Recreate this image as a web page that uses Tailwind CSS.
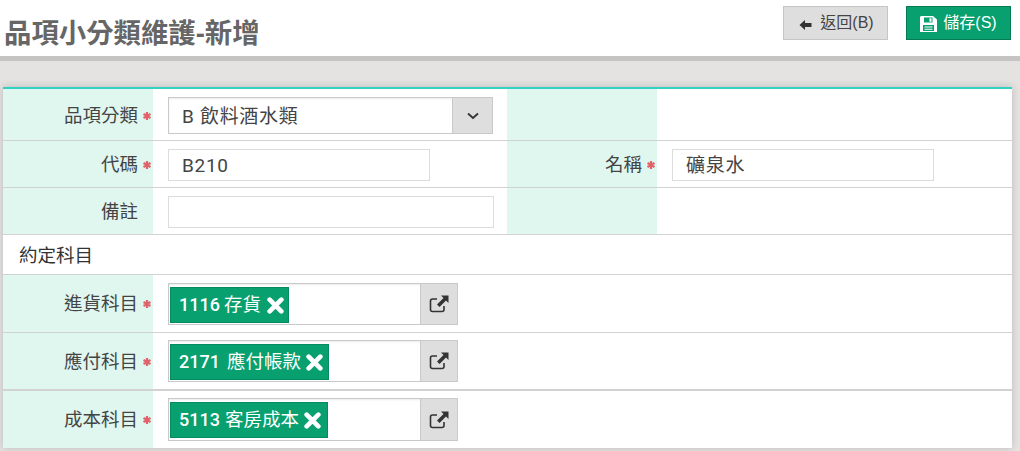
<!DOCTYPE html>
<html lang="zh-Hant">
<head>
  <meta charset="UTF-8" />
  <title>品項小分類維護-新增</title>
  <script src="https://cdn.jsdelivr.net/npm/@tailwindcss/browser@4"></script>
</head>
<body class="h-[451px] w-[1020px] overflow-hidden bg-[#e4e3e2] font-['Liberation_Sans','Noto_Sans_CJK_TC',sans-serif] text-[#444]">

  <!-- header -->
  <header class="flex h-[61px] items-start justify-between border-b-[5px] border-[#c4c4c4] bg-white pl-[4px] pr-[9px]">
    <h1 class="mt-[16px] text-[27.4px] leading-[36px] font-bold text-[#666]">品項小分類維護-新增</h1>
    <div class="mt-[6px] flex gap-[18px]">
      <button class="flex h-[34px] w-[105px] items-center justify-center gap-[8px] border border-[#c6c6c6] bg-[#dedede] pl-[2px] text-[16px] text-[#444]">
        <svg class="mt-[3px] h-[12px] w-[13px]" viewBox="0 0 13 12"><path fill="#333" d="M0.5 6 L6 1 V4 H12.5 V8 H6 V11 Z"/></svg>
        <span class="-mt-[1px]">返回(B)</span>
      </button>
      <button class="flex h-[34px] w-[105px] items-center justify-center gap-[6px] border border-[#067a55] bg-[#08a06f] text-[16px] text-white">
        <svg class="mt-[2px] h-[16px] w-[17px]" viewBox="0 0 17 16"><path fill="#fff" fill-rule="evenodd" d="M1 0 H13 L17 3.5 V16 H0 V1 Z M4 1.5 V6.5 H12.5 V1.5 Z M9.5 2.2 H11.5 V5.8 H9.5 Z M3 9 V15 H14 V9 Z M4.5 10.5 H12.5 V11.5 H4.5 Z M4.5 12.7 H12.5 V13.7 H4.5 Z"/></svg>
        <span class="-mt-[1px]">儲存(S)</span>
      </button>
    </div>
  </header>

  <!-- form card -->
  <main class="ml-[3px] mt-[26px] h-[361px] w-[1009px] border-t-2 border-[#33d1c0] bg-white text-[18.5px] shadow-[0_0_8px_rgba(0,0,0,0.18)]">

    <div class="flex h-[52px] border-b border-[#d2d2d2]">
      <div class="flex w-[150px] items-center justify-end bg-[#e0f7f0] pr-[2px] pt-[2px]">品項分類
        <svg class="ml-[5px] h-[8px] w-[8px]" viewBox="0 0 8 8"><path stroke="#e0636b" stroke-width="2.2" d="M4 0 V8 M0.5 2 L7.5 6 M0.5 6 L7.5 2"/></svg>
      </div>
      <div class="w-[354px] pl-[15px] pt-[8px]">
        <div class="flex h-[37px] w-[325px] border border-[#c9c9c9] bg-white shadow-[inset_0_1px_2px_rgba(0,0,0,0.08)]">
          <div class="flex-1 pl-[13px] font-['Roboto','Noto_Sans_CJK_TC',sans-serif] text-[19px] leading-[37px] tracking-[0.7px]">B 飲料酒水類</div>
          <div class="flex w-[40px] items-center justify-center border-l border-[#c9c9c9] bg-[#dedede]">
            <svg class="h-[8px] w-[12px]" viewBox="0 0 12 8"><path fill="none" stroke="#333" stroke-width="1.8" d="M1 1.5 L6 6 L11 1.5"/></svg>
          </div>
        </div>
      </div>
      <div class="w-[150px] bg-[#e0f7f0]"></div>
    </div>

    <div class="flex h-[47px] border-b border-[#d2d2d2]">
      <div class="flex w-[150px] items-center justify-end bg-[#e0f7f0] pr-[2px] pt-[2px]">代碼
        <svg class="ml-[5px] h-[8px] w-[8px]" viewBox="0 0 8 8"><path stroke="#e0636b" stroke-width="2.2" d="M4 0 V8 M0.5 2 L7.5 6 M0.5 6 L7.5 2"/></svg>
      </div>
      <div class="w-[354px] pl-[15px] pt-[8px]">
        <div class="h-[32px] w-[262px] border border-[#dcdcdc] pl-[13px] font-['Roboto','Noto_Sans_CJK_TC',sans-serif] text-[19px] leading-[31px] tracking-[0.7px]">B210</div>
      </div>
      <div class="flex w-[150px] items-center justify-end bg-[#e0f7f0] pr-[2px] pt-[2px]">名稱
        <svg class="ml-[5px] h-[8px] w-[8px]" viewBox="0 0 8 8"><path stroke="#e0636b" stroke-width="2.2" d="M4 0 V8 M0.5 2 L7.5 6 M0.5 6 L7.5 2"/></svg>
      </div>
      <div class="pl-[15px] pt-[8px]">
        <div class="h-[32px] w-[262px] border border-[#dcdcdc] pl-[13px] text-[19px] leading-[31px] tracking-[0.7px]">礦泉水</div>
      </div>
    </div>

    <div class="flex h-[47px] border-b border-[#d2d2d2]">
      <div class="flex w-[150px] items-center justify-end bg-[#e0f7f0] pr-[15px] pt-[2px]">備註</div>
      <div class="w-[354px] pl-[15px] pt-[8px]">
        <div class="h-[32px] w-[326px] border border-[#dcdcdc]"></div>
      </div>
      <div class="w-[150px] bg-[#e0f7f0]"></div>
    </div>

    <div class="flex h-[40px] items-center border-b border-[#d2d2d2] pl-[16px] pt-[2px] text-[#333]">約定科目</div>

    <div class="flex h-[58px] border-b border-[#d2d2d2]">
      <div class="flex w-[150px] items-center justify-end bg-[#e0f7f0] pr-[2px]">進貨科目
        <svg class="ml-[5px] h-[8px] w-[8px]" viewBox="0 0 8 8"><path stroke="#e0636b" stroke-width="2.2" d="M4 0 V8 M0.5 2 L7.5 6 M0.5 6 L7.5 2"/></svg>
      </div>
      <div class="pl-[15px] pt-[8px]">
        <div class="flex h-[42px] w-[290px] border border-[#c9c9c9] shadow-[inset_0_1px_2px_rgba(0,0,0,0.08)]">
          <div class="flex-1 pl-[1px] pt-[3px]">
            <span class="inline-flex h-[36px] w-[119px] items-center border border-[#068a60] bg-[#08a06f] pl-[8px] text-white"><b class="-mt-[2px] font-['Roboto'] text-[18px] font-medium">1116</b><span class="ml-[4px]">存貨</span>
              <svg class="ml-[6px] h-[17px] w-[17px]" viewBox="0 0 16 16"><path fill="none" stroke="#fff" stroke-width="4.4" stroke-linecap="round" d="M2.5 2.5 L13.5 13.5 M13.5 2.5 L2.5 13.5"/></svg>
            </span>
          </div>
          <div class="flex w-[37px] items-center justify-center border-l border-[#c9c9c9] bg-[#dedede]">
            <svg class="h-[20px] w-[20px]" viewBox="0 0 20 20"><path fill="none" stroke="#333" stroke-width="1.6" d="M15 12 V15.5 Q15 17.5 13 17.5 H3.5 Q1.5 17.5 1.5 15.5 V7 Q1.5 5 3.5 5 H8"/><path fill="#333" d="M12 1.5 H19.5 V9 L17 6.5 L10.5 13 L8 10.5 L14.5 4 Z"/></svg>
          </div>
        </div>
      </div>
    </div>

    <div class="flex h-[58px] border-b-2 border-[#d2d2d2]">
      <div class="flex w-[150px] items-center justify-end bg-[#e0f7f0] pr-[2px] pt-[2px]">應付科目
        <svg class="ml-[5px] h-[8px] w-[8px]" viewBox="0 0 8 8"><path stroke="#e0636b" stroke-width="2.2" d="M4 0 V8 M0.5 2 L7.5 6 M0.5 6 L7.5 2"/></svg>
      </div>
      <div class="pl-[15px] pt-[7px]">
        <div class="flex h-[42px] w-[290px] border border-[#c9c9c9] shadow-[inset_0_1px_2px_rgba(0,0,0,0.08)]">
          <div class="flex-1 pl-[1px] pt-[3px]">
            <span class="inline-flex h-[36px] w-[159px] items-center border border-[#068a60] bg-[#08a06f] pl-[8px] text-white"><b class="-mt-[2px] font-['Roboto'] text-[18px] font-medium">2171</b><span class="ml-[7px]">應付帳款</span>
              <svg class="ml-[5px] h-[17px] w-[17px]" viewBox="0 0 16 16"><path fill="none" stroke="#fff" stroke-width="4.4" stroke-linecap="round" d="M2.5 2.5 L13.5 13.5 M13.5 2.5 L2.5 13.5"/></svg>
            </span>
          </div>
          <div class="flex w-[37px] items-center justify-center border-l border-[#c9c9c9] bg-[#dedede]">
            <svg class="h-[20px] w-[20px]" viewBox="0 0 20 20"><path fill="none" stroke="#333" stroke-width="1.6" d="M15 12 V15.5 Q15 17.5 13 17.5 H3.5 Q1.5 17.5 1.5 15.5 V7 Q1.5 5 3.5 5 H8"/><path fill="#333" d="M12 1.5 H19.5 V9 L17 6.5 L10.5 13 L8 10.5 L14.5 4 Z"/></svg>
          </div>
        </div>
      </div>
    </div>

    <div class="flex h-[57px]">
      <div class="flex w-[150px] items-center justify-end bg-[#e0f7f0] pr-[2px]">成本科目
        <svg class="ml-[5px] h-[8px] w-[8px]" viewBox="0 0 8 8"><path stroke="#e0636b" stroke-width="2.2" d="M4 0 V8 M0.5 2 L7.5 6 M0.5 6 L7.5 2"/></svg>
      </div>
      <div class="pl-[15px] pt-[7px]">
        <div class="flex h-[43px] w-[290px] border border-[#c9c9c9] shadow-[inset_0_1px_2px_rgba(0,0,0,0.08)]">
          <div class="flex-1 pl-[1px] pt-[3px]">
            <span class="inline-flex h-[36px] w-[158px] items-center border border-[#068a60] bg-[#08a06f] pl-[8px] text-white"><b class="-mt-[2px] font-['Roboto'] text-[18px] font-medium">5113</b><span class="ml-[5px]">客房成本</span>
              <svg class="ml-[5px] h-[17px] w-[17px]" viewBox="0 0 16 16"><path fill="none" stroke="#fff" stroke-width="4.4" stroke-linecap="round" d="M2.5 2.5 L13.5 13.5 M13.5 2.5 L2.5 13.5"/></svg>
            </span>
          </div>
          <div class="flex w-[37px] items-center justify-center border-l border-[#c9c9c9] bg-[#dedede]">
            <svg class="h-[20px] w-[20px]" viewBox="0 0 20 20"><path fill="none" stroke="#333" stroke-width="1.6" d="M15 12 V15.5 Q15 17.5 13 17.5 H3.5 Q1.5 17.5 1.5 15.5 V7 Q1.5 5 3.5 5 H8"/><path fill="#333" d="M12 1.5 H19.5 V9 L17 6.5 L10.5 13 L8 10.5 L14.5 4 Z"/></svg>
          </div>
        </div>
      </div>
    </div>
  </main>
</body>
</html>
